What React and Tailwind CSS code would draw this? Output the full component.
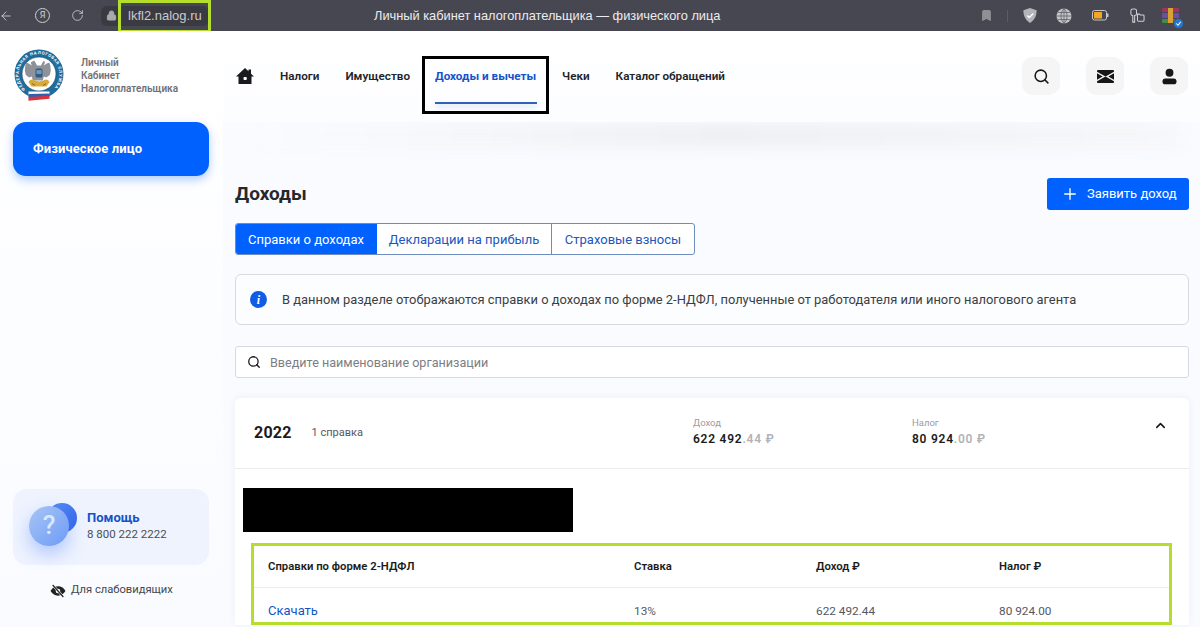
import React from "react";
import { Search, Plus, ChevronUp, ArrowLeft, RotateCw, Lock, Bookmark } from "lucide-react";

const font = { fontFamily: "Roboto, 'Noto Sans', sans-serif" };

function Crest() {
  return (
    <svg viewBox="0 0 50 52" className="w-[50px] h-[52px]">
      <defs>
        <path id="crestArc" d="M12 41A20.300 20.300 0 1 1 38 41" />
      </defs>
      <circle cx="25" cy="25" r="24.500" fill="#1f6d9c" />
      <circle cx="25" cy="25" r="17" fill="#fff" stroke="#103f66" strokeWidth=".6" />
      <text fontSize="4.200" fontWeight="700" fill="#fff" style={{ fontFamily: "Roboto, sans-serif" }}>
        <textPath href="#crestArc" startOffset="1" textLength="94">ФЕДЕРАЛЬНАЯ НАЛОГОВАЯ СЛУЖБА</textPath>
      </text>
      <path d="M20 11.500l1.500 2 1.500 3h4l1.500-3 1.500-2 1 2-1.200 3 3-2 2.500-1 1 3 .5 5-1 4.500-3.500 2.500-2.500-1-1 4h-10l-1-4-2.500 1-3.500-2.500-1-4.500.5-5 1-3 2.500 1 3 2-1.200-3z" fill="#8f9399" />
      <rect x="21.500" y="19.500" width="7" height="9" rx="1.500" fill="#2b5f8a" />
      <path d="M22.500 22h5M22.500 24h5" stroke="#fff" strokeWidth=".7" />
      <path d="M14.500 33c2-3 4-3 6-1.500l4.500 1 4.500-1c2-1.500 4-1.500 6 1.500l-3 4.500H17.500z" fill="#d9a93a" />
      <path d="M18 34.500l3 2M32 34.500l-3 2" stroke="#6b5a1f" strokeWidth=".8" />
      <path d="M14.500 42.500l21 0v3l-21 1z" fill="#fff" />
      <path d="M14.500 45l21-.5v3l-21 1.300z" fill="#2f5fb0" />
      <path d="M14.500 48l21-1.200v3l-21 2z" fill="#d8323c" />
    </svg>
  );
}

function HelpBubble() {
  return (
    <div className="relative w-[50px] h-[40px] -mt-[3px]">
      <div className="absolute left-[18px] top-[-3px] w-[30px] h-[30px] rounded-full bg-gradient-to-br from-[#5a8cf5] to-[#2f63e8]" />
      <div className="absolute left-0 top-0 w-[40px] h-[40px] rounded-full bg-gradient-to-br from-[#a9c4f4] to-[#6c9bf6] shadow-[0_8px_18px_rgba(80,130,255,0.4)] flex items-center justify-center text-[#dbe7fb] text-[26px] font-medium">?</div>
    </div>
  );
}

function RarIcon() {
  return (
    <div className="relative w-[17px] h-[16px] ml-[17px] mr-[21px] flex flex-col gap-px">
      <div className="h-[4px] bg-[#a2325e] rounded-[1px]" />
      <div className="h-[5px] bg-[#6a4fa3] rounded-[1px]" />
      <div className="h-[4px] bg-[#3f8f4a] rounded-[1px]" />
      <div className="absolute left-[6px] top-0 w-[5px] h-[15px] bg-[#d9a12f]" />
      <div className="absolute right-[-5px] bottom-[-5px] w-[11px] h-[11px] rounded-full bg-[#1f7ad6] border border-[#474751] flex items-center justify-center">
        <svg viewBox="0 0 8 8" className="w-[7px] h-[7px]"><path d="M1.500 4l2 2L6.500 2" stroke="#fff" strokeWidth="1.200" fill="none" /></svg>
      </div>
    </div>
  );
}

export default function App() {
  return (
    <div style={font} className="w-[1200px] h-[627px] overflow-hidden flex flex-col bg-white">
      {/* browser bar */}
      <div className="h-[31px] shrink-0 bg-[#474751] flex items-center text-[#d4d4d8] relative">
        <ArrowLeft size={14} strokeWidth={1.5} className="ml-[-1px] text-[#cfcfd3]" />
        <div className="ml-[22px] w-[15px] h-[15px] rounded-full border border-[#cfcfd3] flex items-center justify-center text-[9px] leading-none">Я</div>
        <RotateCw size={13} strokeWidth={1.5} className="ml-[21px] text-[#cfcfd3]" />
        <div className="ml-[17px] h-[20px] w-[108px] rounded-[6px] bg-[#3a3a42] flex items-center pl-[5px]">
          <Lock size={11} fill="#a9a9ae" className="text-[#a9a9ae]" />
          <span className="ml-[11px] text-[13px] text-[#c9c9ce]" style={{ fontFamily: "'Liberation Sans', sans-serif" }}>lkfl2.nalog.ru</span>
        </div>
        <div className="absolute left-[118px] top-0 w-[93px] h-[33px] border-[3px] border-[#b5de2c]" />
        <div className="ml-[165px] text-[12.800px] text-[#ececee]" style={{ fontFamily: "'Liberation Sans', sans-serif" }}>Личный кабинет налогоплательщика — физического лица</div>
        <div className="ml-auto flex items-center">
          <Bookmark size={13} fill="#8f8f96" className="text-[#8f8f96]" />
          <div className="ml-[14px] h-[12px] w-px bg-[#5c5c65]" />
          <svg viewBox="0 0 16 18" className="w-[16px] h-[17px] ml-[14px]"><path d="M8 1l7 2.500c0 6-2 10-7 13.500C3 13.500 1 9.500 1 3.500z" fill="#b3b3b8" /><path d="M5 9l2.200 2.200L11.500 7" stroke="#fff" strokeWidth="1.500" fill="none" /></svg>
          <svg viewBox="0 0 16 16" className="w-[16px] h-[16px] ml-[18px]"><circle cx="8" cy="8" r="7.500" fill="#c4c4c8" /><path d="M0.500 8h15M2 4.500h12M2 11.500h12M8 .5v15M8 .5c-4 4-4 11 0 15M8 .5c4 4 4 11 0 15" stroke="#474751" strokeWidth=".6" fill="none" /></svg>
          <svg viewBox="0 0 17 11" className="w-[17px] h-[11px] ml-[20px]"><rect x=".5" y=".5" width="14" height="9.500" rx="2" fill="none" stroke="#c8c8cc" /><rect x="2" y="2" width="8" height="6.500" fill="#f5a524" /><rect x="15" y="3.500" width="1.500" height="3.500" fill="#c8c8cc" /></svg>
          <svg viewBox="0 0 17 17" className="w-[16px] h-[16px] ml-[20px]" fill="none" stroke="#cfcfd3" strokeWidth="1.100"><path d="M2 3a2 2 0 012-2h2a2 2 0 012 2v3a2 2 0 01-2 2v7H4V8a2 2 0 01-2-2z" /><path d="M9 6.500h2l1 1h3a1 1 0 011 1V13a1 1 0 01-1 1H10a1 1 0 01-1-1z" /></svg>
          <RarIcon />
        </div>
      </div>

      <div className="flex flex-1 min-h-0">
        {/* sidebar */}
        <aside className="w-[223px] shrink-0 flex flex-col bg-gradient-to-b from-white to-[#f9fbff] pl-[13px] pr-[14px] relative">
          <div className="flex items-start pt-[18px] pl-[1px]">
            <Crest />
            <div className="ml-[17px] mt-[7px] text-[10px] leading-[13px] font-semibold text-[#6f7177]">
              <div>Личный</div>
              <div>Кабинет</div>
              <div>Налогоплательщика</div>
            </div>
          </div>
          <div className="mt-[21px] h-[54px] rounded-[13px] bg-[#0061ff] shadow-[0_4px_10px_rgba(0,97,255,0.3)] flex items-center pl-[20px] text-white text-[13px] font-bold tracking-[0.1px]">Физическое лицо</div>
          <div className="mt-auto mb-[62px] h-[76px] rounded-[14px] bg-[#eef3fe] flex items-center pl-[16px]">
            <HelpBubble />
            <div className="ml-[8px] -mt-[2px]">
              <div className="text-[13px] leading-[17px] font-bold text-[#1553c9]">Помощь</div>
              <div className="text-[11.500px] leading-[17px] text-[#4b4e55]">8 800 222 2222</div>
            </div>
          </div>
          <div className="absolute left-[50px] bottom-[28px] flex items-center text-[11.200px] text-[#45484e]">
            <svg viewBox="0 0 24 24" className="w-[16px] h-[16px] mr-[5px]" fill="#222"><path d="M12 5C7 5 3 8 .8 12 3 16 7 19 12 19s9-3 11.200-7C21 8 17 5 12 5z" /><circle cx="12" cy="12" r="3.500" fill="#fff" /><path d="M4 3l16 18" stroke="#fff" strokeWidth="3.500" /><path d="M4 3l16 18" stroke="#222" strokeWidth="1.800" /></svg>
            Для слабовидящих
          </div>
        </aside>

        {/* main */}
        <main className="flex-1 min-w-0 flex flex-col">
          <header className="h-[91px] shrink-0 bg-gradient-to-b from-white to-[#fcfdff] flex items-start pl-[13px] pr-[12px] relative">
            <svg viewBox="0 0 18 18" className="w-[18px] h-[18px] mt-[36px]" fill="#1a1a1e"><path d="M9 1L0 9.500h2.500V17h13V9.500H18L15 6.700V2.500h-2.500v1.800z" /><rect x="7.500" y="10" width="3.300" height="3" rx="1" fill="#fff" /></svg>
            <nav className="flex items-start text-[11.700px] font-semibold text-[#222428] ml-[26px]">
              <a className="pt-[38px] leading-[15px]">Налоги</a>
              <a className="pt-[38px] leading-[15px] ml-[26px]">Имущество</a>
              <div className="relative ml-[12px] w-[127px] h-[58px] mt-[25px] border-[3px] border-black text-center">
                <span className="block pt-[10px] leading-[15px] text-[#1553c9] font-bold">Доходы и вычеты</span>
                <div className="absolute left-[10px] w-[102px] top-[43px] h-[2px] bg-[#2f62b8] shadow-[0_3px_5px_rgba(60,110,220,0.25)]" />
              </div>
              <a className="pt-[38px] leading-[15px] ml-[13px]">Чеки</a>
              <a className="pt-[38px] leading-[15px] ml-[26px]">Каталог обращений</a>
            </nav>
            <div className="ml-auto flex gap-[26px] mt-[26px]">
              <div className="w-[38px] h-[38px] rounded-[11px] bg-[#f5f5f6] flex items-center justify-center"><Search size={17} strokeWidth={2.200} className="text-[#17171a]" /></div>
              <div className="w-[38px] h-[38px] rounded-[11px] bg-[#f5f5f6] flex items-center justify-center">
                <svg viewBox="0 0 17 13" className="w-[17px] h-[13px]" fill="#17171a"><path d="M1 0h15a1 1 0 011 1v.800L8.500 6.500 0 1.800V1a1 1 0 011-1z" /><path d="M0 12.200V11.300l8.500-4.700L17 11.300v.900a1 1 0 01-1 .800H1a1 1 0 01-1-.800z" /><path d="M0 3.200L5.700 6.500 0 9.800zM17 3.200L11.300 6.500 17 9.800z" /></svg>
              </div>
              <div className="w-[38px] h-[38px] rounded-[11px] bg-[#f5f5f6] flex items-center justify-center">
                <svg viewBox="0 0 16 17" className="w-[15px] h-[17px]" fill="#17171a"><circle cx="8" cy="4.500" r="4.200" /><rect x="0.500" y="10.500" width="15" height="6.300" rx="3.100" /></svg>
              </div>
            </div>
          </header>

          <section className="flex-1 min-h-0 bg-[#f9fbff] pl-[12px] pr-[11px] pt-[56px] relative overflow-hidden">
            <div className="absolute left-[40px] right-[20px] top-0 h-[26px] bg-gradient-to-r from-[#f9fbff] via-[#eff0f4] to-[#f6f7fa] blur-[6px]" />
            <div className="relative flex items-center justify-between h-[32px]">
              <h1 className="text-[19px] font-bold text-[#26282c]">Доходы</h1>
              <button className="w-[142px] h-[32px] rounded-[3px] bg-[#0061ff] text-white text-[13px] flex items-center pl-[14px]">
                <Plus size={18} strokeWidth={1.800} className="mr-[8px]" />Заявить доход
              </button>
            </div>
            <div className="relative mt-[13px] flex w-[460px] h-[32px] rounded-[3px] border border-[#6f8cc0] text-[13px] text-[#2056be] bg-white overflow-hidden">
              <div className="w-[142px] bg-[#0061ff] text-white flex items-center justify-center -m-px pt-px">Справки о доходах</div>
              <div className="w-[175px] ml-px border-r border-[#6f8cc0] flex items-center justify-center pt-px">Декларации на прибыль</div>
              <div className="flex-1 flex items-center justify-center pt-px">Страховые взносы</div>
            </div>
            <div className="relative mt-[19px] h-[51px] rounded-[6px] border border-[#d5dae4] bg-[#fcfdff] flex items-center pl-[14px] text-[12.900px] text-[#3b3e44]">
              <span className="w-[17px] h-[17px] rounded-full bg-[#0f5ce6] text-white text-[12px] italic font-bold flex items-center justify-center" style={{ fontFamily: "'Liberation Serif', serif" }}>i</span>
              <span className="ml-[15px] pt-px">В данном разделе отображаются справки о доходах по форме 2-НДФЛ, полученные от работодателя или иного налогового агента</span>
            </div>
            <div className="relative mt-[21px] h-[32px] rounded-[3px] border border-[#d5dae4] bg-white flex items-center pl-[11px] text-[12.600px] text-[#7b7e85]">
              <Search size={14} strokeWidth={2.200} className="text-[#17171a]" />
              <span className="ml-[9px] pt-[2px]">Введите наименование организации</span>
            </div>

            <div className="relative mt-[20px] rounded-t-[6px] bg-white shadow-[0_0_8px_rgba(30,50,90,0.06)]">
              <div className="h-[71px] border-b border-[#ececf0] flex items-center relative">
                <span className="ml-[19px] text-[16px] font-bold tracking-[0.2px] text-[#1b1c20]">2022</span>
                <span className="ml-[20px] text-[11px] text-[#55585e]">1 справка</span>
                <div className="absolute left-[458px] top-[19px]">
                  <div className="text-[9.500px] leading-[12px] text-[#9a9ca2]">Доход</div>
                  <div className="text-[12px] leading-[17px] mt-[2px] font-semibold tracking-[0.75px] text-[#1b1c20]">622 492<span className="text-[#b1b3b8]">.44 ₽</span></div>
                </div>
                <div className="absolute left-[677px] top-[19px]">
                  <div className="text-[9.500px] leading-[12px] text-[#9a9ca2]">Налог</div>
                  <div className="text-[12px] leading-[17px] mt-[2px] font-semibold tracking-[0.75px] text-[#1b1c20]">80 924<span className="text-[#b1b3b8]">.00 ₽</span></div>
                </div>
                <ChevronUp size={15} strokeWidth={2.500} className="absolute right-[21px] top-[20px] text-[#17171a]" />
              </div>
              <div className="ml-[8px] mt-[19px] w-[330px] h-[44px] bg-black" />
              <div className="mt-[11px] mx-[16px] mr-[17px] h-[82px] border-[3px] border-[#b5de2c] bg-white flex flex-col">
                <div className="h-[42px] shrink-0 border-b border-[#ececf0] grid grid-cols-[366px_182px_183px_1fr] items-center pt-[2px] pl-[14px] text-[11.300px] font-semibold text-[#1b1c20]">
                  <span>Справки по форме 2-НДФЛ</span>
                  <span>Ставка</span>
                  <span>Доход ₽</span>
                  <span>Налог ₽</span>
                </div>
                <div className="flex-1 grid grid-cols-[366px_182px_183px_1fr] items-end pb-[2px] pl-[14px] text-[11.800px] leading-[18px] text-[#55585e]">
                  <span className="text-[13px] text-[#1553c9]">Скачать</span>
                  <span>13%</span>
                  <span>622 492.44</span>
                  <span>80 924.00</span>
                </div>
              </div>
            </div>
          </section>
        </main>
      </div>
    </div>
  );
}
